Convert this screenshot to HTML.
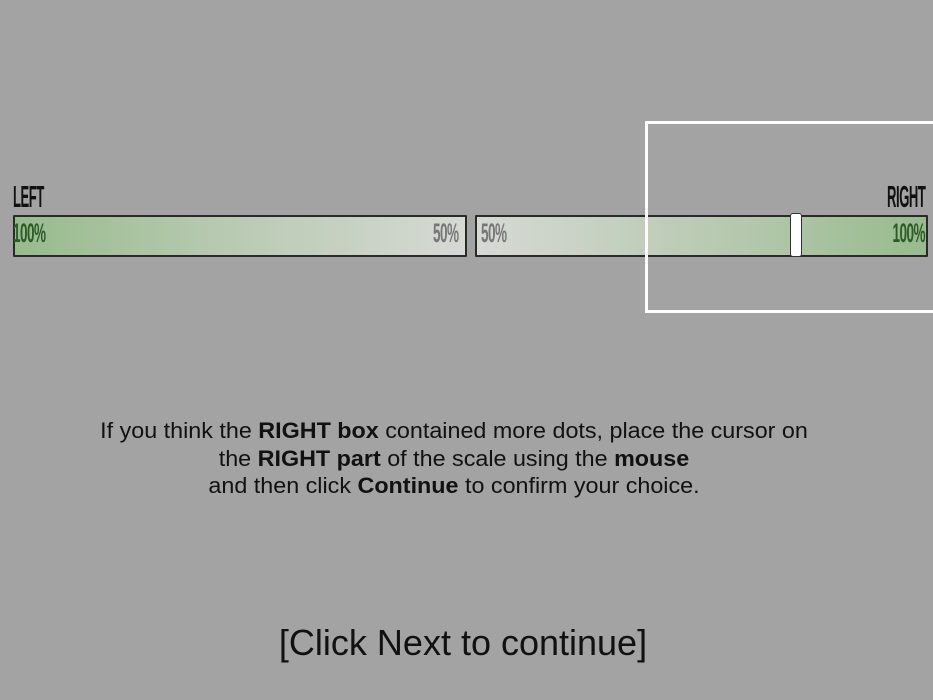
<!DOCTYPE html>
<html><head><meta charset="utf-8"><style>
html,body{margin:0;padding:0}
body{width:933px;height:700px;background:#a3a3a3;position:relative;overflow:hidden;font-family:"Liberation Sans",sans-serif;color:#111}
.lab{position:absolute;font-family:"Liberation Sans Narrow","Liberation Sans",sans-serif;font-weight:bold;letter-spacing:-1px;color:#111}
.bar{position:absolute;top:215px;height:38px;border:2px solid #2a2a2a;border-radius:1px}
.pct{position:absolute;font-family:"Liberation Sans Narrow","Liberation Sans",sans-serif;font-weight:bold;font-size:27px;top:218px;letter-spacing:-1px;transform:scaleX(.5)}
</style></head><body>
<div class="lab" style="left:13px;top:179px;font-size:31px;transform:scaleX(.42);transform-origin:left">LEFT</div>
<div class="lab" style="right:8px;top:179px;font-size:31px;transform:scaleX(.42);transform-origin:right">RIGHT</div>
<div class="bar" style="left:13px;width:450px;background:linear-gradient(to right,#97bb8c,#b7c9b0 45%,#d6d9d4)"></div>
<div class="bar" style="left:475px;width:449px;background:linear-gradient(to right,#d6d9d4,#b7c9b0 55%,#97bb8c)"></div>
<div class="pct" style="left:13px;color:#2d5a26;transform-origin:left">100%</div>
<div class="pct" style="left:433px;color:#777;transform-origin:left">50%</div>
<div class="pct" style="left:481px;color:#777;transform-origin:left">50%</div>
<div class="pct" style="right:8px;color:#2d5a26;transform-origin:right">100%</div>
<div style="position:absolute;left:645px;top:121px;width:300px;height:186px;border:3px solid #fff"></div>
<div style="position:absolute;left:790px;top:213px;width:10px;height:42px;background:#fff;border:1px solid #333;border-radius:3px"></div>
<div style="position:absolute;left:0;width:908px;top:417px;text-align:center;font-size:22px;line-height:27.5px;transform:scaleX(1.06);transform-origin:454px 0">If you think the <b>RIGHT box</b> contained more dots, place the cursor on<br>the <b>RIGHT part</b> of the scale using the <b>mouse</b><br>and then click <b>Continue</b> to confirm your choice.</div>
<div style="position:absolute;left:0;width:926px;top:622px;text-align:center;font-size:36px">[Click Next to continue]</div>
</body></html>
